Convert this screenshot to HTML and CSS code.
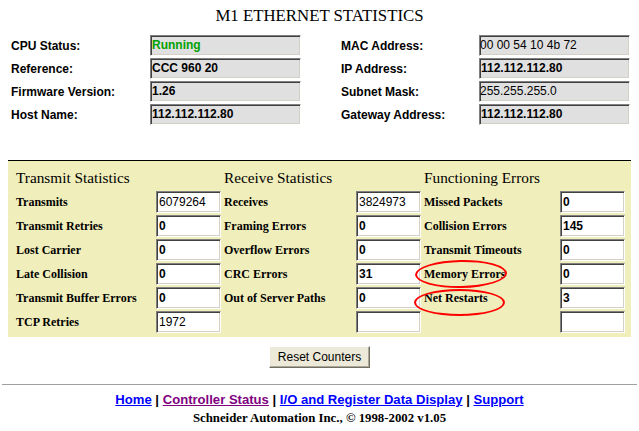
FILE: index.html
```html
<!DOCTYPE html>
<html lang="en">
<head>
    <meta charset="UTF-8">
    <title>M1 Ethernet Statistics</title>
    <link rel="stylesheet" href="styles.css">
</head>
<body>
    <h1 class="title">M1 ETHERNET STATISTICS</h1>

    <div class="info">
        <span class="info-label">CPU Status:</span>
        <span class="info-value running">Running</span>
        <span class="info-label right">MAC Address:</span>
        <span class="info-value plain">00 00 54 10 4b 72</span>

        <span class="info-label">Reference:</span>
        <span class="info-value">CCC 960 20</span>
        <span class="info-label right">IP Address:</span>
        <span class="info-value">112.112.112.80</span>

        <span class="info-label">Firmware Version:</span>
        <span class="info-value">1.26</span>
        <span class="info-label right">Subnet Mask:</span>
        <span class="info-value plain">255.255.255.0</span>

        <span class="info-label">Host Name:</span>
        <span class="info-value">112.112.112.80</span>
        <span class="info-label right">Gateway Address:</span>
        <span class="info-value">112.112.112.80</span>
    </div>

    <div class="stats">
        <div class="stats-head">Transmit Statistics</div>
        <div class="stats-head">Receive Statistics</div>
        <div class="stats-head">Functioning Errors</div>

        <span class="stat-label">Transmits</span>
        <span class="stat-value thin">6079264</span>
        <span class="stat-label">Receives</span>
        <span class="stat-value thin">3824973</span>
        <span class="stat-label">Missed Packets</span>
        <span class="stat-value">0</span>

        <span class="stat-label">Transmit Retries</span>
        <span class="stat-value">0</span>
        <span class="stat-label">Framing Errors</span>
        <span class="stat-value">0</span>
        <span class="stat-label">Collision Errors</span>
        <span class="stat-value">145</span>

        <span class="stat-label">Lost Carrier</span>
        <span class="stat-value">0</span>
        <span class="stat-label">Overflow Errors</span>
        <span class="stat-value">0</span>
        <span class="stat-label">Transmit Timeouts</span>
        <span class="stat-value">0</span>

        <span class="stat-label">Late Collision</span>
        <span class="stat-value">0</span>
        <span class="stat-label">CRC Errors</span>
        <span class="stat-value">31</span>
        <span class="stat-label">Memory Errors</span>
        <span class="stat-value">0</span>

        <span class="stat-label">Transmit Buffer Errors</span>
        <span class="stat-value">0</span>
        <span class="stat-label">Out of Server Paths</span>
        <span class="stat-value">0</span>
        <span class="stat-label">Net Restarts</span>
        <span class="stat-value">3</span>

        <span class="stat-label">TCP Retries</span>
        <span class="stat-value thin">1972</span>
        <span class="stat-label"></span>
        <span class="stat-value"></span>
        <span class="stat-label"></span>
        <span class="stat-value"></span>

        <!-- hand-drawn marks around the two counters to watch -->
        <span class="mark mark-memory"></span>
        <span class="mark mark-restarts"></span>
    </div>

    <div class="actions">
        <button class="btn" type="button">Reset Counters</button>
    </div>

    <hr class="rule">

    <div class="nav">
        <a href="#home">Home</a> |
        <a href="#status" class="visited">Controller Status</a> |
        <a href="#io">I/O and Register Data Display</a> |
        <a href="#support">Support</a>
    </div>
    <div class="copy">Schneider Automation Inc., &copy; 1998-2002 v1.05</div>
</body>
</html>
```

FILE: styles.css
```css
body {
    margin: 0;
    font-family: "Liberation Serif", "Times New Roman", serif;
    color: #000;
    background: #fff;
}

.title {
    margin: 6px 0 0;
    font-size: 16.8px;
    font-weight: normal;
    line-height: 20px;
    text-align: center;
}

/* top block: controller identity */
.info {
    display: grid;
    grid-template-columns: 139px 151px 178px 151px;
    grid-auto-rows: 21px;
    row-gap: 2px;
    margin-top: 9px;
    padding-left: 11px;
    font-family: "Liberation Sans", Arial, sans-serif;
    font-size: 12px;
    font-weight: bold;
    align-items: center;
}

.info-label.right {
    padding-left: 40px;
}

.info-value {
    height: 21px;
    box-sizing: border-box;
    padding: 0 1px;
    line-height: 19px;
    background: #e0e0e0;
    border-top: 1px solid #808080;
    border-left: 1px solid #808080;
    border-right: 1px solid #fff;
    border-bottom: 1px solid #fff;
    box-shadow: inset 1px 1px #404040, inset -1px -1px #d4d0c8;
    white-space: nowrap;
}

.info-value.running {
    color: #00a000;
}

.info-value.plain {
    font-weight: normal;
    padding-left: 0;
}

/* yellow counters block */
.stats {
    position: relative;
    display: grid;
    grid-template-columns: 143px 65px 135px 65px 139px 65px;
    grid-auto-rows: 22px;
    row-gap: 2px;
    margin: 35px 8px 0;
    padding: 6px 6px 4px 5px;
    background: #f0eebb;
    border-top: 1px solid #000;
    align-items: center;
}

.stats-head {
    grid-column: span 2;
    padding-left: 3px;
    font-size: 15.3px;
    line-height: 22px;
}

.stat-label {
    padding-left: 3px;
    font-size: 12px;
    font-weight: bold;
    white-space: nowrap;
}

.stat-value {
    height: 22px;
    box-sizing: border-box;
    padding: 0 2px;
    line-height: 20px;
    font-family: "Liberation Sans", Arial, sans-serif;
    font-size: 12px;
    font-weight: bold;
    background: #fff;
    border-top: 1px solid #808080;
    border-left: 1px solid #808080;
    border-right: 1px solid #fff;
    border-bottom: 1px solid #fff;
    box-shadow: inset 1px 1px #404040, inset -1px -1px #d4d0c8;
}

.stat-value.thin {
    font-weight: normal;
}

.mark {
    position: absolute;
    box-sizing: border-box;
    border: 2px solid #f00;
    border-radius: 50%;
}

.mark-memory {
    left: 407px;
    top: 99px;
    width: 92px;
    height: 28px;
    transform: rotate(-1deg);
}

.mark-restarts {
    left: 406px;
    top: 128px;
    width: 91px;
    height: 27px;
}

.actions {
    display: flex;
    justify-content: center;
    margin-top: 9px;
}

.btn {
    width: 101px;
    height: 22px;
    margin: 0;
    padding: 0;
    font-family: "Liberation Sans", Arial, sans-serif;
    font-size: 12px;
    color: #000;
    background: #ece9d8;
    border-top: 1px solid #fff;
    border-left: 1px solid #fff;
    border-right: 1px solid #716f64;
    border-bottom: 1px solid #716f64;
    box-shadow: inset -1px -1px #aca899;
}

.rule {
    margin: 16px 2px 0;
    border: 0;
    border-top: 1px solid #a0a0a0;
    height: 0;
}

.nav {
    margin-top: 7px;
    font-family: "Liberation Sans", Arial, sans-serif;
    font-size: 13.1px;
    font-weight: bold;
    line-height: 16px;
    text-align: center;
}

.nav a {
    color: #0000ff;
}

.nav a.visited {
    color: #800080;
}

.copy {
    margin-top: 2px;
    font-size: 12.8px;
    font-weight: bold;
    line-height: 16px;
    text-align: center;
}
```
